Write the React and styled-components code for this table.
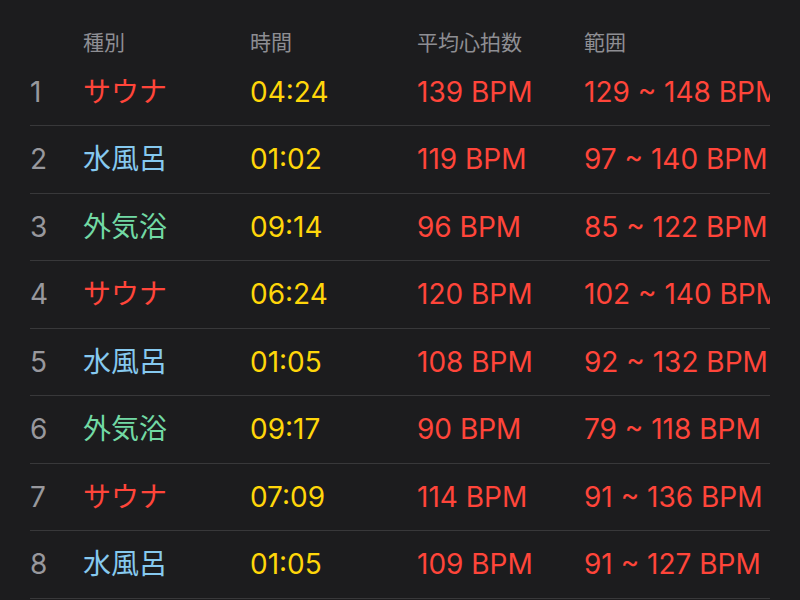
import React from "react";
import styled, { createGlobalStyle } from "styled-components";

const Global = createGlobalStyle`
  html, body { margin: 0; padding: 0; background: #1c1c1e; }
  body {
    font-family: Inter, "Noto Sans CJK JP", sans-serif;
    -webkit-font-smoothing: antialiased;
  }
`;

const Page = styled.div`
  width: 800px;
  height: 600px;
  background: #1c1c1e;
  overflow: hidden;
`;

const Table = styled.div`
  margin: 0 30px;
  width: 740px;
  overflow: hidden;
`;

const Row = styled.div`
  display: grid;
  grid-template-columns: 53px 167px 167px 167px 1fr;
  align-items: center;
  height: ${(p) => (p.$header ? "58.5px" : "67.5px")};
  box-sizing: border-box;
  border-bottom: ${(p) => (p.$header ? "none" : "1px solid #38383a")};
  white-space: nowrap;
`;

const HeaderRow = styled(Row)`
  align-items: end;
  padding-bottom: 2px;
`;

const HeadCell = styled.div`
  font-size: 21px;
  color: #8e8e93;
  line-height: 28px;
`;

const Cell = styled.div`
  font-size: 28px;
  line-height: 34px;
  color: ${(p) => p.$color};
  overflow: visible;
`;

const colors = {
  num: "#98989d",
  sauna: "#ff453a",
  water: "#86c9ef",
  air: "#72d9a4",
  time: "#ffd60a",
  bpm: "#ff453a",
};

const typeColor = {
  サウナ: colors.sauna,
  水風呂: colors.water,
  外気浴: colors.air,
};

const data = [
  ["サウナ", "04:24", "139 BPM", "129 ~ 148 BPM"],
  ["水風呂", "01:02", "119 BPM", "97 ~ 140 BPM"],
  ["外気浴", "09:14", "96 BPM", "85 ~ 122 BPM"],
  ["サウナ", "06:24", "120 BPM", "102 ~ 140 BPM"],
  ["水風呂", "01:05", "108 BPM", "92 ~ 132 BPM"],
  ["外気浴", "09:17", "90 BPM", "79 ~ 118 BPM"],
  ["サウナ", "07:09", "114 BPM", "91 ~ 136 BPM"],
  ["水風呂", "01:05", "109 BPM", "91 ~ 127 BPM"],
];

export default function App() {
  return (
    <Page>
      <Global />
      <Table>
        <HeaderRow $header>
          <HeadCell />
          <HeadCell>種別</HeadCell>
          <HeadCell>時間</HeadCell>
          <HeadCell>平均心拍数</HeadCell>
          <HeadCell>範囲</HeadCell>
        </HeaderRow>
        {data.map(([type, time, avg, range], i) => (
          <Row key={i}>
            <Cell $color={colors.num}>{i + 1}</Cell>
            <Cell $color={typeColor[type]}>{type}</Cell>
            <Cell $color={colors.time}>{time}</Cell>
            <Cell $color={colors.bpm}>{avg}</Cell>
            <Cell $color={colors.bpm}>{range}</Cell>
          </Row>
        ))}
      </Table>
    </Page>
  );
}
